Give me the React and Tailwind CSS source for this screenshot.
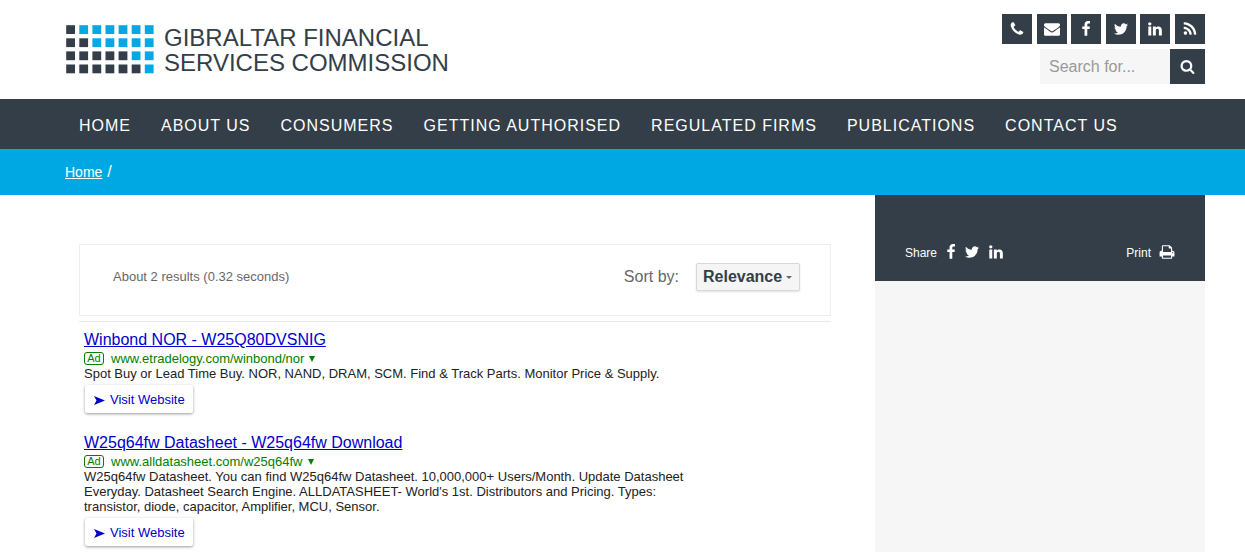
const PATHS = {
  phone:
    'M1600 1240q0 27-10 70.5t-21 68.5q-21 50-122 106-94 51-186 51-27 0-53-3.5t-57.5-12.5-47-14.5-55.5-20.5-49-18q-98-35-175-83-127-79-264-216t-216-264q-48-77-83-175-3-9-18-49t-20.5-55.5-14.5-47-12.5-57.5-3.5-53q0-92 51-186 56-101 106-122 25-11 68.5-21t70.5-10q14 0 21 3 18 6 53 76 11 19 30 54t35 63.5 31 53.5q3 4 17.5 25t21.5 35.5 7 28.5q0 20-28.5 50t-62 55-62 53-28.5 46q0 9 5 22.5t8.5 20.5 14 24 11.5 19q76 137 174 235t235 174q2 1 19 11.5t24 14 20.5 8.5 22.5 5q18 0 46-28.5t53-62 55-62 50-28.5q14 0 28.5 7t35.5 21.5 25 17.5q25 15 53.5 31t63.5 35 54 30q70 35 76 53 3 7 3 21z',
  envelope:
    'M1792 710v794q0 66-47 113t-113 47h-1472q-66 0-113-47t-47-113v-794q44 49 101 87 362 246 497 345 57 42 92.5 65.5t94.5 48 110 24.5h2q51 0 110-24.5t94.5-48 92.5-65.5q170-123 498-345 57-39 100-87zm0-294q0 79-49 151t-122 123q-376 261-468 325-10 7-42.5 31t-54 38.5-52 32.5-57.5 27-50 9h-2q-23 0-50-9t-57.5-27-52-32.5-54-38.5-42.5-31q-91-64-262-182.5t-205-142.5q-62-42-117-115.5t-55-136.5q0-78 41.5-130t118.5-52h1472q65 0 112.5 47t47.5 113z',
  facebook:
    'M1343 12v264h-157q-86 0-116 36t-30 108v189h293l-39 296h-254v759h-306v-759h-255v-296h255v-218q0-186 104-288.5t277-102.5q147 0 228 12z',
  twitter:
    'M1684 408q-67 98-162 167 1 14 1 42 0 130-38 259.500t-115.500 248.500-184.500 210.500-258 146-323 54.500q-271 0-496-145 35 4 78 4 225 0 401-138-105-2-188-64.500t-114-159.500q33 5 61 5 43 0 85-11-112-23-185.500-111.500t-73.500-205.500v-4q68 38 146 41-66-44-105-115t-39-154q0-88 44-163 121 149 294.500 238.500t371.500 99.500q-8-38-8-74 0-134 94.500-228.500t228.500-94.500q140 0 236 102 109-21 205-78-37 115-142 178 93-10 186-50z',
  linkedin:
    'M477 625v991h-330v-991h330zm21-306q1 73-50.500 122t-135.500 49h-2q-82 0-132-49t-50-122q0-74 51.500-122.500t134.500-48.500 133 48.500 51 122.500zm1166 729v568h-329v-530q0-105-40.500-164.500t-126.500-59.500q-63 0-105.500 34.500t-63.500 85.500q-11 30-11 81v553h-329q2-399 2-647t-1-296l-1-48h329v144h-2q20-32 41-56t56.500-52 87-43.500 114.500-15.500q171 0 275 113.500t104 332.500z',
  rss: 'M576 1344q0 80-56 136t-136 56-136-56-56-136 56-136 136-56 136 56 56 136zm512 123q2 28-17 48-18 21-47 21h-135q-25 0-43-16.500t-20-41.500q-22-229-184.500-391.500t-391.500-184.500q-25-2-41.500-20t-16.500-43v-135q0-29 21-47 17-17 43-17h5q160 13 306 80.500t259 181.500q114 113 181.500 259t80.500 306zm512 2q2 27-18 47-18 20-46 20h-143q-26 0-44.500-17.500t-19.500-42.500q-12-215-101-408.500t-231.500-336-336-231.500-408.500-102q-25-1-42.500-19.500t-17.500-43.500v-143q0-28 20-46 18-18 44-18h3q262 13 501.500 120t425.500 294q187 186 294 425.500t120 501.500z',
  search:
    'M1216 832q0-185-131.500-316.500t-316.500-131.500-316.500 131.500-131.500 316.500 131.500 316.500 316.500 131.500 316.500-131.500 131.500-316.500zm512 832q0 52-38 90t-90 38q-54 0-90-38l-343-342q-179 124-399 124-143 0-273.500-55.500t-225-150-150-225-55.500-273.500 55.500-273.500 150-225 225-150 273.500-55.500 273.500 55.500 225 150 150 225 55.500 273.500q0 220-124 399l343 343q37 37 37 90z',
  print:
    'M448 1536h896v-256h-896v256zm0-640h896v-384h-160q-40 0-68-28t-28-68v-160h-640v640zm1152 64q0-26-19-45t-45-19-45 19-19 45 19 45 45 19 45-19 19-45zm128 0v416q0 13-9.500 22.500t-22.500 9.500h-224v160q0 40-28 68t-68 28h-960q-40 0-68-28t-28-68v-160h-224q-13 0-22.500-9.500t-9.500-22.500v-416q0-79 56.500-135.500t135.500-56.500h64v-544q0-40 28-68t68-28h672q40 0 88 20t76 48l152 152q28 28 48 76t20 88v256h64q79 0 135.500 56.500t56.500 135.500z',
};

function Icon({ name, className }) {
  return (
    <svg viewBox="0 0 1792 1792" fill="currentColor" aria-hidden="true" className={className}>
      <path d={PATHS[name]} />
    </svg>
  );
}

// Number of dark squares at the start of each row of the logo grid.
const DARK_SQUARES = [1, 2, 5, 6];

function Logo() {
  return (
    <a href="#" className="flex items-start gap-[10px] text-[#343e48]">
      <svg viewBox="0 0 88 49" className="mt-[11px] h-[49px] w-[88px]" aria-hidden="true">
        {DARK_SQUARES.map((dark, row) =>
          Array.from({ length: 7 }, (_, col) => (
            <rect
              key={`${row}-${col}`}
              x={0.2 + col * 13.1}
              y={0.2 + row * 13.1}
              width="8.8"
              height="8.8"
              fill={col < dark ? '#343e48' : '#07a7e3'}
            />
          )),
        )}
      </svg>
      <span className="mt-[11px] text-2xl leading-[25px]">
        GIBRALTAR FINANCIAL
        <br />
        SERVICES COMMISSION
      </span>
    </a>
  );
}

const SOCIAL = [
  ['phone', 'Phone'],
  ['envelope', 'Email'],
  ['facebook', 'Facebook'],
  ['twitter', 'Twitter'],
  ['linkedin', 'LinkedIn'],
  ['rss', 'RSS'],
];

const NAV = [
  'HOME',
  'ABOUT US',
  'CONSUMERS',
  'GETTING AUTHORISED',
  'REGULATED FIRMS',
  'PUBLICATIONS',
  'CONTACT US',
];

const RESULTS = [
  {
    title: 'Winbond NOR - W25Q80DVSNIG',
    url: 'www.etradelogy.com/winbond/nor',
    text: 'Spot Buy or Lead Time Buy. NOR, NAND, DRAM, SCM. Find & Track Parts. Monitor Price & Supply.',
  },
  {
    title: 'W25q64fw Datasheet - W25q64fw Download',
    url: 'www.alldatasheet.com/w25q64fw',
    text: "W25q64fw Datasheet. You can find W25q64fw Datasheet. 10,000,000+ Users/Month. Update Datasheet Everyday. Datasheet Search Engine. ALLDATASHEET- World's 1st. Distributors and Pricing. Types: transistor, diode, capacitor, Amplifier, MCU, Sensor.",
  },
];

function Result({ title, url, text }) {
  return (
    <article className="flex flex-col items-start">
      <a href="#" className="text-base leading-5 text-[#0000cc] underline">
        {title}
      </a>
      <div className="mt-px flex h-[15px] items-center text-[13px] leading-[15px] text-[#008000]">
        <span className="mr-[7px] flex h-[13px] w-5 items-center justify-center rounded-[3px] border border-[#008000] text-[11px] leading-none">
          Ad
        </span>
        <a href="#">{url}</a>
        <svg viewBox="0 0 6 6" className="ml-[5px] h-1.5 w-1.5" fill="currentColor" aria-hidden="true">
          <path d="M0 0h6L3 6z" />
        </svg>
      </div>
      <p className="max-w-[620px] text-[13px] leading-[15px] text-[#222222]">{text}</p>
      <a
        href="#"
        className="mt-1 ml-px flex h-7 items-center gap-[5px] rounded-[2px] pt-0.5 pr-2 pl-[9px] text-[13px] text-[#0000cc] shadow-[0_1px_3px_rgba(0,0,0,0.4)]"
      >
        <svg viewBox="0 0 11 9" className="h-[9px] w-[11px]" fill="currentColor" aria-hidden="true">
          <path d="M0 0L11 4.500L0 9L2.500 4.500z" />
        </svg>
        Visit Website
      </a>
    </article>
  );
}

export default function App() {
  return (
    <div className="flex min-h-screen flex-col bg-white font-['Liberation_Sans',Arial,sans-serif]">
      <header className="flex items-start justify-between pt-[14px] pr-10 pb-[15px] pl-[66px]">
        <Logo />
        <div className="flex flex-col items-end gap-[5px]">
          <div className="flex w-[203px] justify-between">
            {SOCIAL.map(([name, label]) => (
              <a
                key={name}
                href="#"
                aria-label={label}
                className="flex size-[30px] items-center justify-center bg-[#343e48] text-white"
              >
                <Icon name={name} className="size-4" />
              </a>
            ))}
          </div>
          <form className="flex h-[35px]" onSubmit={(e) => e.preventDefault()}>
            <input
              type="text"
              aria-label="Search for"
              placeholder="Search for..."
              className="w-[130px] bg-[#f6f6f6] px-[9px] text-base text-[#343e48] placeholder:text-[#999999]"
            />
            <button
              type="submit"
              aria-label="Search"
              className="flex w-[35px] items-center justify-center bg-[#343e48] text-white"
            >
              <Icon name="search" className="size-[15px]" />
            </button>
          </form>
        </div>
      </header>

      <nav className="bg-[#343e48] pl-[79px]">
        <ul className="flex h-[50px] items-center gap-[30px] pt-[3px] text-base tracking-[1px] text-white">
          {NAV.map((item) => (
            <li key={item}>
              <a href="#" className="whitespace-nowrap">
                {item}
              </a>
            </li>
          ))}
        </ul>
      </nav>

      <div className="flex h-[46px] items-center gap-[5px] bg-[#00a8e3] pl-[65px] text-white">
        <a href="#" className="text-sm underline">
          Home
        </a>
        <span className="text-base">/</span>
      </div>

      <div className="flex flex-1 pr-10">
        <main className="flex-1 pt-[49px] pr-11 pl-[79px]">
          <div className="flex h-[72px] items-center justify-between border border-[#eeeeee] pr-[30px] pb-1.5 pl-[33px] text-[#676767]">
            <span className="text-[13px]">About 2 results (0.32 seconds)</span>
            <div className="flex items-center gap-[17px]">
              <label htmlFor="sort" className="text-base">
                Sort by:
              </label>
              <div className="relative">
                <select
                  id="sort"
                  className="block h-7 w-[104px] appearance-none rounded-[2px] border border-[#d8d8d8] bg-[#f5f5f5] pr-3 pl-1.5 text-base font-bold text-[#343e48] shadow-[0_1px_2px_rgba(0,0,0,0.12)]"
                >
                  <option>Relevance</option>
                  <option>Date</option>
                </select>
                <svg
                  viewBox="0 0 6 3"
                  className="pointer-events-none absolute top-[13px] right-2 h-[3px] w-1.5"
                  fill="#666666"
                  aria-hidden="true"
                >
                  <path d="M0 0h6L3 3z" />
                </svg>
              </div>
            </div>
          </div>
          <div className="mt-[5px] flex flex-col gap-5 border-t border-[#e9e9e9] pt-2 pl-[5px]">
            {RESULTS.map((result) => (
              <Result key={result.title} {...result} />
            ))}
          </div>
        </main>

        <aside className="w-[330px] bg-[#f6f6f6]">
          <div className="flex h-[86px] items-end justify-between bg-[#343e48] px-[30px] pb-5 text-xs text-white">
            <div className="flex items-center">
              <span className="mr-1.5 pt-0.5">Share</span>
              <a href="#" aria-label="Share on Facebook">
                <Icon name="facebook" className="size-4" />
              </a>
              <a href="#" aria-label="Share on Twitter" className="ml-[5px]">
                <Icon name="twitter" className="size-4" />
              </a>
              <a href="#" aria-label="Share on LinkedIn" className="ml-2">
                <Icon name="linkedin" className="size-4" />
              </a>
            </div>
            <button type="button" className="flex items-center gap-2">
              <span className="pt-0.5">Print</span>
              <Icon name="print" className="size-4" />
            </button>
          </div>
        </aside>
      </div>
    </div>
  );
}
